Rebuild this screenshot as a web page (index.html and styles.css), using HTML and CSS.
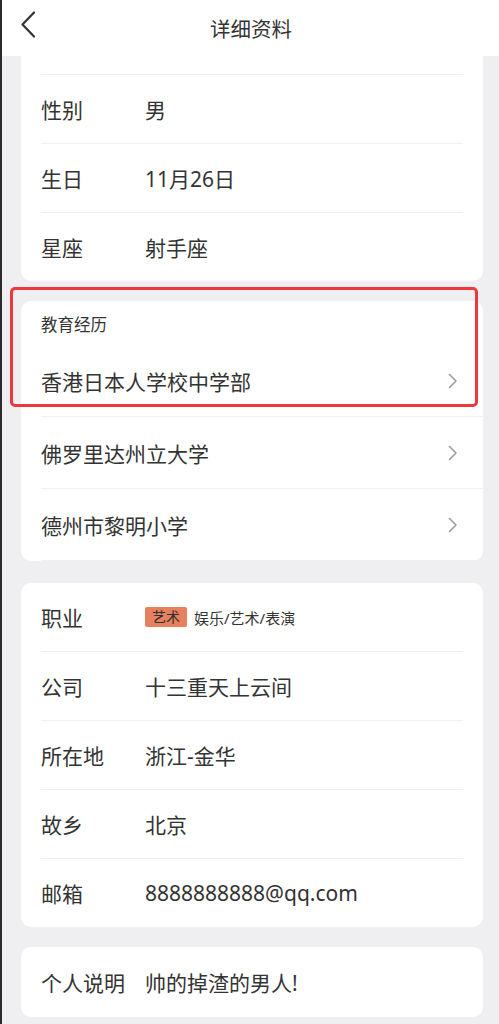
FILE: index.html
```html
<!DOCTYPE html>
<html lang="zh-CN">

<head>
    <meta charset="UTF-8">
    <meta name="viewport" content="width=device-width, initial-scale=1.0">
    <title>详细资料</title>
    <link rel="stylesheet" href="styles.css">
</head>

<body>
    <div class="page">
        <!-- Header -->
        <div class="header">
            <svg class="back" width="16" height="27" viewBox="0 0 16 27">
                <polyline points="14,1.5 2.5,13.5 14,25.5" fill="none" stroke="#333" stroke-width="2.2" stroke-linecap="round" stroke-linejoin="round" />
            </svg>
            <div class="title">详细资料</div>
        </div>

        <div class="content">
            <!-- basic info -->
            <div class="card card-top">
                <div class="row row-cut"></div>
                <div class="row"><span class="label">性别</span><span class="value">男</span></div>
                <div class="row"><span class="label">生日</span><span class="value">11月26日</span></div>
                <div class="row"><span class="label">星座</span><span class="value">射手座</span></div>
            </div>

            <!-- education -->
            <div class="card edu">
                <div class="edu-title">教育经历</div>
                <div class="edu-row">
                    <span class="value">香港日本人学校中学部</span>
                    <svg class="arrow" width="10" height="16" viewBox="0 0 10 16">
                        <polyline points="1.5,1.5 8,8 1.5,14.5" fill="none" stroke="#9a9aa8" stroke-width="1.6" stroke-linecap="round" stroke-linejoin="round" />
                    </svg>
                </div>
                <div class="edu-row">
                    <span class="value">佛罗里达州立大学</span>
                    <svg class="arrow" width="10" height="16" viewBox="0 0 10 16">
                        <polyline points="1.5,1.5 8,8 1.5,14.5" fill="none" stroke="#9a9aa8" stroke-width="1.6" stroke-linecap="round" stroke-linejoin="round" />
                    </svg>
                </div>
                <div class="edu-row">
                    <span class="value">德州市黎明小学</span>
                    <svg class="arrow" width="10" height="16" viewBox="0 0 10 16">
                        <polyline points="1.5,1.5 8,8 1.5,14.5" fill="none" stroke="#9a9aa8" stroke-width="1.6" stroke-linecap="round" stroke-linejoin="round" />
                    </svg>
                </div>
                <div class="highlight"></div>
            </div>

            <!-- work -->
            <div class="card work">
                <div class="row">
                    <span class="label">职业</span>
                    <span class="tag">艺术</span>
                    <span class="job">娱乐/艺术/表演</span>
                </div>
                <div class="row"><span class="label">公司</span><span class="value">十三重天上云间</span></div>
                <div class="row"><span class="label">所在地</span><span class="value">浙江-金华</span></div>
                <div class="row"><span class="label">故乡</span><span class="value">北京</span></div>
                <div class="row"><span class="label">邮箱</span><span class="value">8888888888@qq.com</span></div>
            </div>

            <!-- about -->
            <div class="card about">
                <div class="row"><span class="label">个人说明</span><span class="value">帅的掉渣的男人!</span></div>
            </div>
        </div>
    </div>
</body>

</html>
```

FILE: styles.css
```css
* {
    box-sizing: border-box;
}

body {
    margin: 0;
    font-family: "Noto Sans", "Noto Sans CJK SC", sans-serif;
    color: #333;
}

.page {
    width: 499px;
    height: 1024px;
    overflow: hidden;
    background-color: #efeff1;
    border-left: 2px solid #2b2b2b;
}

.header {
    height: 56px;
    background-color: #fff;
    display: flex;
    align-items: center;
    justify-content: center;
    position: relative;
}

.back {
    position: absolute;
    left: 18px;
    top: 11px;
}

.title {
    font-size: 20.5px;
    margin-left: 1px;
}

.content {
    padding: 0 16px 0 19px;
    display: flex;
    flex-direction: column;
    gap: 20px;
}

.card {
    background-color: #fff;
    border-radius: 10px;
    padding: 0 20px;
}

.card-top {
    border-radius: 0 0 10px 10px;
}

.work {
    margin-top: 2px;
}

.row {
    height: 69px;
    display: flex;
    align-items: center;
    border-bottom: 1px solid #f0f0f2;
}

.row:last-child {
    border-bottom: none;
    height: 68px;
}

.row-cut {
    height: 19px;
}

.label {
    width: 104px;
    font-size: 21px;
    flex-shrink: 0;
}

.value {
    font-size: 21px;
}

.tag {
    background-color: #e6805f;
    color: #2f2f2f;
    font-size: 14px;
    line-height: 20px;
    height: 20px;
    padding: 0 7px;
    border-radius: 2px;
    margin-right: 7px;
}

.job {
    font-size: 15px;
}

/* education */
.edu {
    position: relative;
    padding-right: 0;
}

.edu-title {
    height: 44px;
    font-size: 16.5px;
    display: flex;
    align-items: center;
    padding-top: 1px;
}

.edu-row {
    height: 72px;
    display: flex;
    align-items: center;
    justify-content: space-between;
    padding-right: 25px;
    border-bottom: 1px solid #f0f0f2;
}

.edu-row:last-child {
    border-bottom: none;
    height: 75px;
}

.highlight {
    position: absolute;
    left: -11px;
    top: -14px;
    width: 468px;
    height: 120px;
    border: 3px solid #f0383c;
    border-radius: 5px;
}

.about .row {
    height: 70px;
}
```
